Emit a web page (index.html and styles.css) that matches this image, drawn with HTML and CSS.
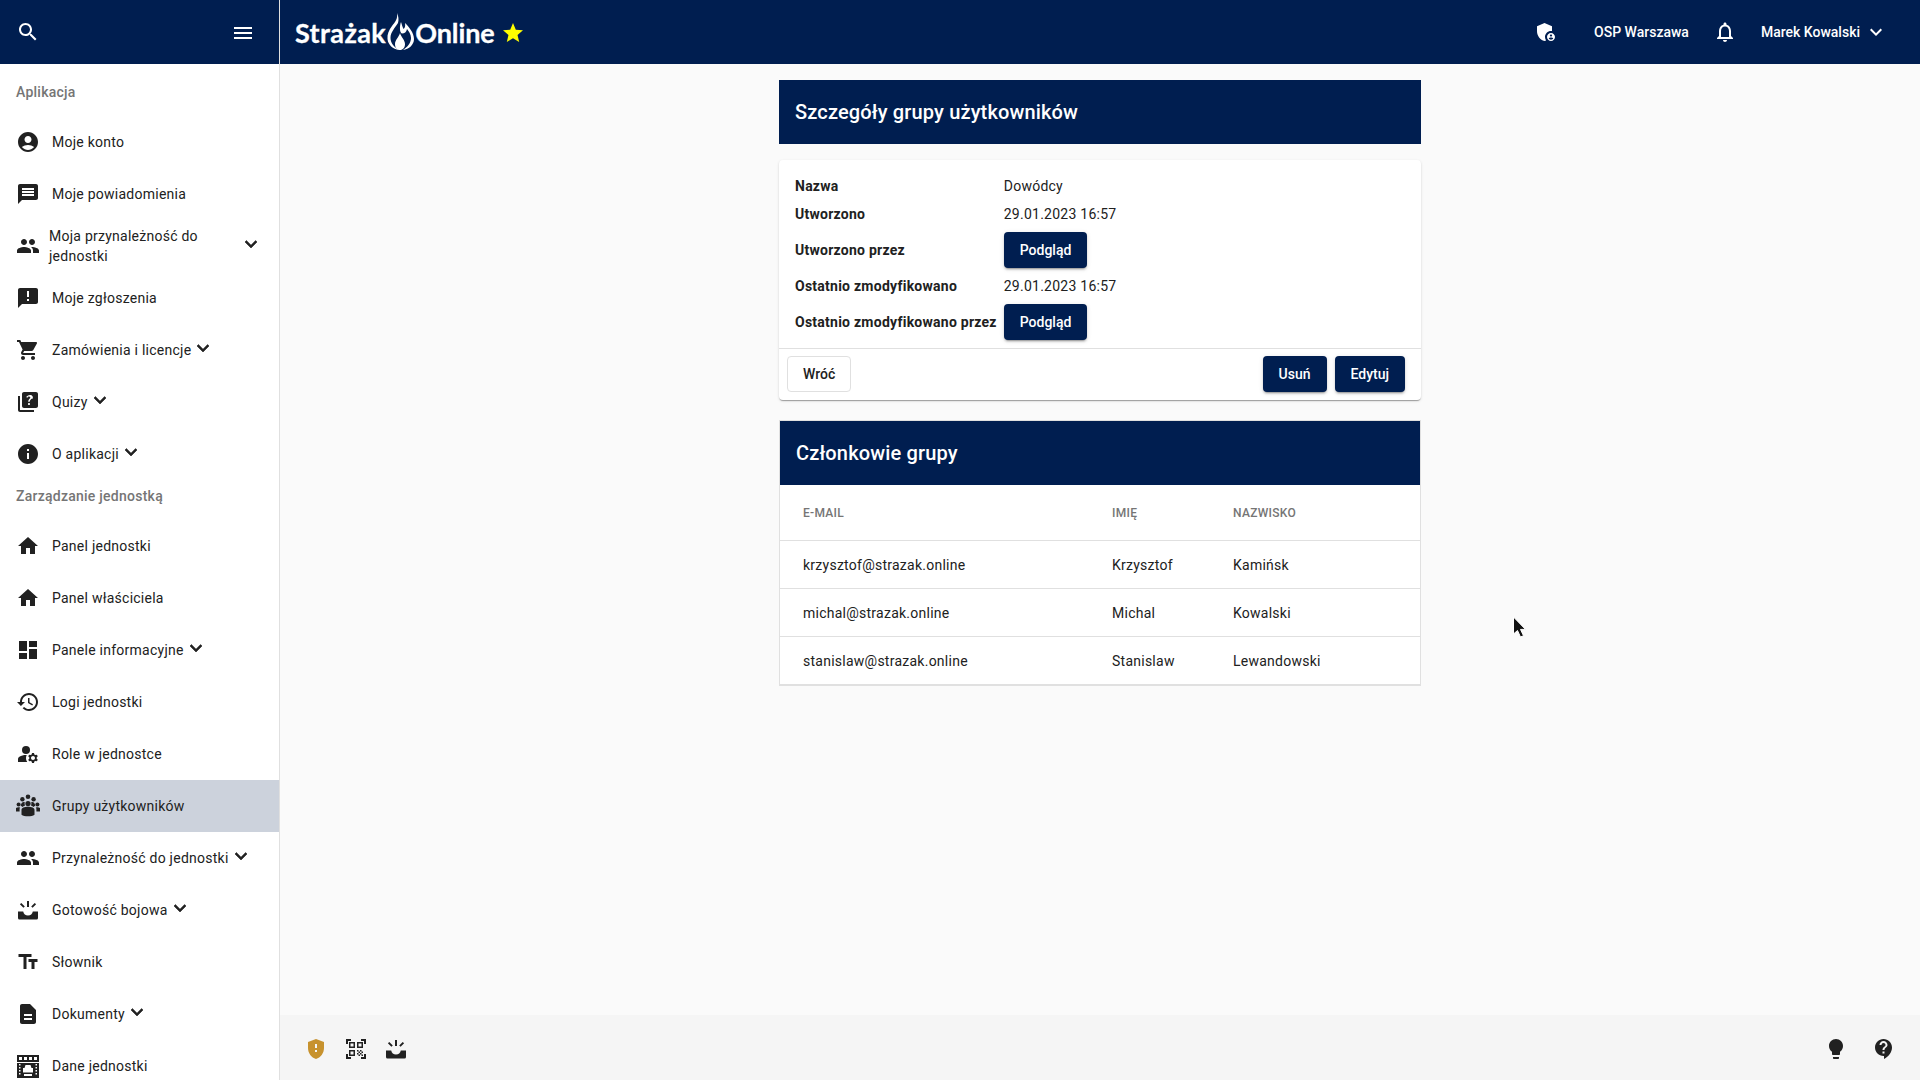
FILE: index.html
```html
<!DOCTYPE html>
<html lang="pl">
<head>
  <meta charset="UTF-8">
  <title>Strażak Online - Szczegóły grupy użytkowników</title>
  <link rel="stylesheet" href="styles.css">
</head>
<body>
  <svg class="sprite" xmlns="http://www.w3.org/2000/svg">
    <symbol id="i-search" viewBox="0 0 24 24"><path d="M15.5 14h-.79l-.28-.27C15.41 12.59 16 11.11 16 9.5 16 5.91 13.09 3 9.5 3S3 5.91 3 9.5 5.91 16 9.5 16c1.61 0 3.09-.59 4.23-1.57l.27.28v.79l5 4.99L20.49 19l-4.99-5zm-6 0C7.01 14 5 11.99 5 9.5S7.01 5 9.5 5 14 7.01 14 9.5 11.99 14 9.5 14z"/></symbol>
    <symbol id="i-menu" viewBox="0 0 24 24"><path d="M3 18h18v-2H3v2zm0-5h18v-2H3v2zm0-7v2h18V6H3z"/></symbol>
    <symbol id="i-more" viewBox="0 0 24 24"><path d="M16.59 8.59L12 13.17 7.41 8.59 6 10l6 6 6-6z"/></symbol>
    <symbol id="i-star" viewBox="0 0 24 24"><path d="M12 17.27L18.18 21l-1.64-7.03L22 9.24l-7.19-.61L12 2 9.19 8.63 2 9.24l5.46 4.73L5.82 21z"/></symbol>
    <symbol id="i-account" viewBox="0 0 24 24"><path d="M12 2C6.48 2 2 6.48 2 12s4.48 10 10 10 10-4.48 10-10S17.52 2 12 2zm0 4c1.93 0 3.5 1.57 3.5 3.5S13.93 13 12 13s-3.5-1.57-3.5-3.5S10.07 6 12 6zm0 14c-2.03 0-4.43-.82-6.14-2.88C7.55 15.8 9.68 15 12 15s4.45.8 6.14 2.12C16.43 19.18 14.03 20 12 20z"/></symbol>
    <symbol id="i-message" viewBox="0 0 24 24"><path d="M20 2H4c-1.1 0-1.99.9-1.99 2L2 22l4-4h14c1.1 0 2-.9 2-2V4c0-1.1-.9-2-2-2zm-2 12H6v-2h12v2zm0-3H6V9h12v2zm0-3H6V6h12v2z"/></symbol>
    <symbol id="i-people" viewBox="0 0 24 24"><path d="M16 11c1.66 0 2.99-1.34 2.99-3S17.66 5 16 5c-1.66 0-3 1.34-3 3s1.34 3 3 3zm-8 0c1.66 0 2.99-1.34 2.99-3S9.66 5 8 5C6.34 5 5 6.34 5 8s1.34 3 3 3zm0 2c-2.33 0-7 1.17-7 3.5V19h14v-2.5c0-2.33-4.67-3.5-7-3.5zm8 0c-.29 0-.62.02-.97.05 1.16.84 1.97 1.97 1.97 3.45V19h6v-2.5c0-2.33-4.67-3.5-7-3.5z"/></symbol>
    <symbol id="i-report" viewBox="0 0 24 24"><path d="M20 2H4c-1.1 0-1.99.9-1.99 2L2 22l4-4h14c1.1 0 2-.9 2-2V4c0-1.1-.9-2-2-2zm-7 9h-2V5h2v6zm0 4h-2v-2h2v2z"/></symbol>
    <symbol id="i-cart" viewBox="0 0 24 24"><path d="M7 18c-1.1 0-1.99.9-1.99 2S5.9 22 7 22s2-.9 2-2-.9-2-2-2zM1 2v2h2l3.6 7.59-1.35 2.45c-.16.28-.25.61-.25.96 0 1.1.9 2 2 2h12v-2H7.42c-.14 0-.25-.11-.25-.25l.03-.12.9-1.63h7.45c.75 0 1.41-.41 1.75-1.03l3.58-6.49c.08-.14.12-.31.12-.48 0-.55-.45-1-1-1H5.21l-.94-2H1zm16 16c-1.1 0-1.99.9-1.99 2s.89 2 1.99 2 2-.9 2-2-.9-2-2-2z"/></symbol>
    <symbol id="i-quiz" viewBox="0 0 24 24"><path d="M4 6H2v14c0 1.1.9 2 2 2h14v-2H4V6zm16-4H8c-1.1 0-2 .9-2 2v12c0 1.1.9 2 2 2h12c1.1 0 2-.9 2-2V4c0-1.1-.9-2-2-2zm-7.01 13c-.59 0-1.05-.47-1.05-1.05 0-.59.47-1.04 1.05-1.04.59 0 1.04.45 1.04 1.04-.01.58-.45 1.05-1.04 1.05zm2.5-6.17c-.63.93-1.23 1.21-1.56 1.81-.13.24-.18.4-.18 1.18h-1.52c0-.41-.06-1.08.26-1.65.41-.73 1.18-1.16 1.63-1.8.48-.68.21-1.94-1.14-1.94-.88 0-1.32.67-1.5 1.23l-1.37-.57C11.51 5.96 12.52 5 13.99 5c1.23 0 2.08.56 2.51 1.26.37.61.58 1.73.01 2.57z"/></symbol>
    <symbol id="i-info" viewBox="0 0 24 24"><path d="M12 2C6.48 2 2 6.48 2 12s4.48 10 10 10 10-4.48 10-10S17.52 2 12 2zm1 15h-2v-6h2v6zm0-8h-2V7h2v2z"/></symbol>
    <symbol id="i-home" viewBox="0 0 24 24"><path d="M10 20v-6h4v6h5v-8h3L12 3 2 12h3v8z"/></symbol>
    <symbol id="i-dashboard" viewBox="0 0 24 24"><path d="M3 13h8V3H3v10zm0 8h8v-6H3v6zm10 0h8V11h-8v10zm0-18v6h8V3h-8z"/></symbol>
    <symbol id="i-history" viewBox="0 0 24 24"><path d="M13 3c-4.97 0-9 4.03-9 9H1l3.89 3.89.07.14L9 12H6c0-3.87 3.13-7 7-7s7 3.13 7 7-3.13 7-7 7c-1.93 0-3.68-.79-4.94-2.06l-1.42 1.42C8.27 19.99 10.51 21 13 21c4.97 0 9-4.03 9-9s-4.03-9-9-9zm-1 5v5l4.28 2.54.72-1.21-3.5-2.08V8H12z"/></symbol>
    <symbol id="i-roles" viewBox="0 0 24 24"><circle cx="10" cy="8" r="4"/><path d="M10.67 13.02C10.45 13.01 10.23 13 10 13c-2.42 0-4.68.67-6.61 1.82C2.51 15.34 2 16.32 2 17.35V20h9.26C10.47 18.87 10 17.49 10 16c0-1.07.25-2.07.67-2.98z"/><path d="M20.75 16c0-.22-.03-.42-.06-.63l1.14-1.01-1-1.73-1.45.49c-.32-.27-.68-.48-1.08-.63L18 11h-2l-.3 1.49c-.4.15-.76.36-1.08.63l-1.45-.49-1 1.73 1.14 1.01c-.03.21-.06.41-.06.63s.03.42.06.63l-1.14 1.01 1 1.73 1.45-.49c.32.27.68.48 1.08.63L16 21h2l.3-1.49c.4-.15.76-.36 1.08-.63l1.45.49 1-1.73-1.14-1.01c.03-.21.06-.41.06-.63zM17 18c-1.1 0-2-.9-2-2s.9-2 2-2 2 .9 2 2-.9 2-2 2z"/></symbol>
    <symbol id="i-groups" viewBox="0 0 24 24"><circle cx="12" cy="2.8" r="2.3"/><circle cx="6.4" cy="5.2" r="2.2"/><circle cx="17.6" cy="5.2" r="2.2"/><circle cx="2.6" cy="10.4" r="2"/><circle cx="21.4" cy="10.4" r="2"/><circle cx="12" cy="9.6" r="2.6"/><path d="M-.5 17.500v-2.100c0-1.400 1.300-2.200 3.100-2.200.5 0 1 .1 1.400.2-.3.6-.4 1.200-.4 1.900v2.200H-.5zM24.500 17.500v-2.100c0-1.400-1.300-2.200-3.100-2.200-.5 0-1 .1-1.400.2.3.6.4 1.200.4 1.900v2.200h4.100zM4.800 11.800c.4-2.600 1.300-3.800 3-3.800.4 0 .7.100 1 .2-.1.500-.3 1-.2 1.400 0 .7.200 1.300.5 1.800-1 .3-1.800.8-2.400 1.500L4.800 11.800zM19.200 11.800c-.4-2.600-1.300-3.800-3-3.800-.4 0-.7.100-1 .2.1.5.300 1 .2 1.400 0 .7-.2 1.300-.5 1.800 1 .3 1.800.8 2.400 1.500l1.900-1.100zM5.500 20.800v-5c0-2 2.800-3.100 6.500-3.100s6.500 1.100 6.500 3.100v5c-1.500 1-3.800 1.500-6.500 1.500s-5-.5-6.500-1.500z"/></symbol>
    <symbol id="i-alert" viewBox="0 0 24 24"><path d="M2 13.500h5.200a4.900 4.900 0 0 0 9.600 0H22V20a1.500 1.500 0 0 1-1.500 1.500h-17A1.500 1.500 0 0 1 2 20z"/><path d="M11 3h2v6h-2zM3.900 6.300l1.400-1.400 3.500 3.500-1.400 1.400zM20.100 6.300l-1.400-1.400-3.500 3.500 1.400 1.400z"/></symbol>
    <symbol id="i-dict" viewBox="0 0 24 24"><path d="M2.500 4v3h5v12h3V7h5V4h-13zm19 5h-9v3h3v7h3v-7h3V9z"/></symbol>
    <symbol id="i-doc" viewBox="0 0 24 24"><path d="M14 2H6c-1.100 0-1.990.9-1.990 2L4 20c0 1.100.89 2 1.990 2H18c1.100 0 2-.9 2-2V8l-6-6zm2 16H8v-2h8v2zm0-4H8v-2h8v2z"/></symbol>
    <symbol id="i-unit" viewBox="0 0 24 24"><path d="M1 1h22v23H1zM3 3v3h3V3zm5 0v3h3V3zm5 0v3h3V3zm5 0v3h3V3zM1 8h22v1H1zM3 10v1.500h1.500V10zm0 3v1.500h1.500V13zm0 3v1.500h1.500V16zm0 3v1.500h1.500V19zM19.500 10v1.500H21V10zm0 3v1.500H21V13zm0 3v1.500H21V16zm0 3v1.500H21V19zM9.500 11l-1 3H7v4.500h10V14h-1.500l-1-3zM8 20v2h8v-2z" fill-rule="evenodd"/></symbol>
    <symbol id="i-admin" viewBox="0 0 24 24"><path d="M17 11c.34 0 .67.04 1 .09V6.270L10.500 3 3 6.270v4.910c0 4.540 3.200 8.790 7.500 9.820.55-.13 1.080-.32 1.600-.55C11.410 19.470 11 18.280 11 17c0-3.310 2.690-6 6-6z"/><path d="M17 13c-2.210 0-4 1.790-4 4s1.790 4 4 4 4-1.790 4-4-1.790-4-4-4zm0 1.380c.62 0 1.120.51 1.120 1.120s-.51 1.120-1.120 1.120-1.120-.51-1.120-1.120.5-1.120 1.120-1.120zm0 5.370c-.93 0-1.740-.46-2.240-1.170.05-.72 1.510-1.080 2.240-1.080s2.190.36 2.240 1.080c-.5.710-1.310 1.170-2.240 1.170z"/></symbol>
    <symbol id="i-bell" viewBox="0 0 24 24"><path d="M12 22c1.100 0 2-.9 2-2h-4c0 1.100.9 2 2 2zm6-6v-5c0-3.070-1.630-5.640-4.500-6.320V4c0-.83-.67-1.500-1.500-1.500s-1.500.67-1.500 1.500v.68C7.640 5.360 6 7.920 6 11v5l-2 2v1h16v-1l-2-2zm-2 1H8v-6c0-2.480 1.510-4.500 4-4.500s4 2.020 4 4.500v6z"/></symbol>
    <symbol id="i-gpp" viewBox="0 0 24 24"><path d="M12 2L4 5v6.090c0 5.050 3.410 9.760 8 10.910 4.590-1.150 8-5.860 8-10.910V5l-8-3zm1 13h-2v-2h2v2zm0-4h-2V7h2v4z"/></symbol>
    <symbol id="i-qr" viewBox="0 0 24 24"><path d="M9.500 6.500v3h-3v-3h3M11 5H5v6h6V5zm-1.500 9.500v3h-3v-3h3M11 13H5v6h6v-6zm6.500-6.500v3h-3v-3h3M19 5h-6v6h6V5zm-6 8h1.500v1.500H13V13zm1.500 1.500H16V16h-1.500v-1.500zM16 13h1.500v1.500H16V13zm-3 3h1.500v1.500H13V16zm1.500 1.500H16V19h-1.500v-1.500zM16 16h1.500v1.500H16V16zm1.500-1.500H19V16h-1.500v-1.500zm0 3H19V19h-1.500v-1.500zM22 7h-2V4h-3V2h5v5zm0 15v-5h-2v3h-3v2h5zM2 22h5v-2H4v-3H2v5zM2 2v5h2V4h3V2H2z"/></symbol>
    <symbol id="i-bulb" viewBox="0 0 24 24"><path d="M9 21c0 .55.45 1 1 1h4c.55 0 1-.45 1-1v-1H9v1zm3-19C8.140 2 5 5.140 5 9c0 2.380 1.190 4.470 3 5.740V17c0 .55.45 1 1 1h6c.55 0 1-.45 1-1v-2.260c1.810-1.270 3-3.360 3-5.740 0-3.860-3.140-7-7-7z"/></symbol>
    <symbol id="i-help" viewBox="0 0 24 24"><path d="M11.500 2C6.810 2 3 5.810 3 10.500S6.810 19 11.500 19h.5v3c4.860-2.340 8-7 8-11.500C20 5.810 16.190 2 11.500 2zm1 14.500h-2v-2h2v2zm0-3.500h-2c0-3.250 3-3 3-5 0-1.100-.9-2-2-2s-2 .9-2 2h-2c0-2.210 1.790-4 4-4s4 1.790 4 4c0 2.500-3 2.750-3 5z"/></symbol>
  </svg>

  <div class="app">
    <aside class="sidebar">
      <div class="side-top">
        <svg class="icon"><use href="#i-search"/></svg>
        <svg class="icon side-menu"><use href="#i-menu"/></svg>
      </div>
      <nav class="side-nav">
        <div class="nav-title">Aplikacja</div>
        <a class="nav-item"><svg class="icon"><use href="#i-account"/></svg><span>Moje konto</span></a>
        <a class="nav-item"><svg class="icon"><use href="#i-message"/></svg><span>Moje powiadomienia</span></a>
        <a class="nav-item nav-wrap"><svg class="icon"><use href="#i-people"/></svg><span>Moja przynależność do jednostki</span><svg class="icon nav-more"><use href="#i-more"/></svg></a>
        <a class="nav-item"><svg class="icon"><use href="#i-report"/></svg><span>Moje zgłoszenia</span></a>
        <a class="nav-item"><svg class="icon"><use href="#i-cart"/></svg><span>Zamówienia i licencje</span><svg class="icon"><use href="#i-more"/></svg></a>
        <a class="nav-item"><svg class="icon"><use href="#i-quiz"/></svg><span>Quizy</span><svg class="icon"><use href="#i-more"/></svg></a>
        <a class="nav-item"><svg class="icon"><use href="#i-info"/></svg><span>O aplikacji</span><svg class="icon"><use href="#i-more"/></svg></a>
        <div class="nav-title">Zarządzanie jednostką</div>
        <a class="nav-item"><svg class="icon"><use href="#i-home"/></svg><span>Panel jednostki</span></a>
        <a class="nav-item"><svg class="icon"><use href="#i-home"/></svg><span>Panel właściciela</span></a>
        <a class="nav-item"><svg class="icon"><use href="#i-dashboard"/></svg><span>Panele informacyjne</span><svg class="icon"><use href="#i-more"/></svg></a>
        <a class="nav-item"><svg class="icon"><use href="#i-history"/></svg><span>Logi jednostki</span></a>
        <a class="nav-item"><svg class="icon"><use href="#i-roles"/></svg><span>Role w jednostce</span></a>
        <a class="nav-item active"><svg class="icon"><use href="#i-groups"/></svg><span>Grupy użytkowników</span></a>
        <a class="nav-item"><svg class="icon"><use href="#i-people"/></svg><span>Przynależność do jednostki</span><svg class="icon"><use href="#i-more"/></svg></a>
        <a class="nav-item"><svg class="icon"><use href="#i-alert"/></svg><span>Gotowość bojowa</span><svg class="icon"><use href="#i-more"/></svg></a>
        <a class="nav-item"><svg class="icon"><use href="#i-dict"/></svg><span>Słownik</span></a>
        <a class="nav-item"><svg class="icon"><use href="#i-doc"/></svg><span>Dokumenty</span><svg class="icon"><use href="#i-more"/></svg></a>
        <a class="nav-item"><svg class="icon"><use href="#i-unit"/></svg><span>Dane jednostki</span></a>
      </nav>
    </aside>

    <div class="main">
      <header class="topbar">
        <div class="logo">
          <span class="logo-first">Strażak</span>
          <svg class="flame" viewBox="0 0 28 37">
            <path d="M10 0C11 6 8 9 5 13 2 17 0 21 .5 26 1 32 6 36 12 37 7 34 3.500 30 3.500 25 3.500 19 8 15 11 10 12 7 11.500 3 10 0z"/>
            <path d="M14 9C15 12 15.500 14 16.500 16 18 15 18.500 13 18 10 22 14 27 20 27 26 27 32 22 36 16 37 20.500 34 24 30 24 25 24 21 21.500 18 20 16 19.500 19 17.500 20.500 15 20.500 12.500 20 12.500 13 14 9z"/>
            <path d="M13 20C14 24 18 27 18 31 18 34.500 16 37 13 37 10 37 8 34.500 8 31 8 27 12 24 13 20z"/>
          </svg>
          <span>Online</span>
          <svg class="icon star"><use href="#i-star"/></svg>
        </div>
        <div class="top-right">
          <svg class="icon"><use href="#i-admin"/></svg>
          <span class="top-unit">OSP Warszawa</span>
          <svg class="icon top-bell"><use href="#i-bell"/></svg>
          <span class="top-user">Marek Kowalski</span>
          <svg class="icon"><use href="#i-more"/></svg>
        </div>
      </header>

      <main class="content">
        <div class="column">
          <h1 class="page-title">Szczegóły grupy użytkowników</h1>
          <section class="card">
            <table class="details">
              <tr><th>Nazwa</th><td>Dowódcy</td></tr>
              <tr><th>Utworzono</th><td>29.01.2023 16:57</td></tr>
              <tr class="btn-row"><th>Utworzono przez</th><td><button class="btn">Podgląd</button></td></tr>
              <tr><th>Ostatnio zmodyfikowano</th><td>29.01.2023 16:57</td></tr>
              <tr class="btn-row"><th>Ostatnio zmodyfikowano przez</th><td><button class="btn">Podgląd</button></td></tr>
            </table>
            <div class="card-actions">
              <button class="btn btn-plain">Wróć</button>
              <div class="actions-right">
                <button class="btn">Usuń</button>
                <button class="btn">Edytuj</button>
              </div>
            </div>
          </section>

          <section class="members">
            <h2 class="page-title">Członkowie grupy</h2>
            <table class="members-table">
              <thead>
                <tr><th class="col-mail">E-mail</th><th class="col-name">Imię</th><th>Nazwisko</th></tr>
              </thead>
              <tbody>
                <tr><td>krzysztof@strazak.online</td><td>Krzysztof</td><td>Kamińsk</td></tr>
                <tr><td>michal@strazak.online</td><td>Michal</td><td>Kowalski</td></tr>
                <tr><td>stanislaw@strazak.online</td><td>Stanislaw</td><td>Lewandowski</td></tr>
              </tbody>
            </table>
          </section>
        </div>
      </main>

      <footer class="bottombar">
        <div class="bottom-group">
          <svg class="icon warn"><use href="#i-gpp"/></svg>
          <svg class="icon"><use href="#i-qr"/></svg>
          <svg class="icon"><use href="#i-alert"/></svg>
        </div>
        <div class="bottom-group bottom-help">
          <svg class="icon"><use href="#i-bulb"/></svg>
          <svg class="icon"><use href="#i-help"/></svg>
        </div>
      </footer>
    </div>
  </div>

  <svg class="cursor" viewBox="0 0 14 24">
    <path d="M1.500 1v17l4-3.500 3 6.500 3-1.300-3-6.300h5z"/>
  </svg>
</body>
</html>
```

FILE: styles.css
```css
:root {
  --navy: #001e50;
  --text: #212121;
  --muted: #757575;
  --line: #e0e0e0;
}

* {
  box-sizing: border-box;
}

body {
  margin: 0;
  height: 100vh;
  overflow: hidden;
  font-family: Roboto, "Noto Sans", sans-serif;
  font-size: 14px;
  line-height: 20px;
  color: var(--text);
  background: #fafafa;
}

.sprite {
  display: none;
}

.icon {
  width: 24px;
  height: 24px;
  flex: none;
  fill: currentColor;
}

.app {
  display: flex;
  height: 100vh;
}

/* sidebar */
.sidebar {
  width: 280px;
  flex: none;
  display: flex;
  flex-direction: column;
  overflow: hidden;
}

.side-top {
  height: 64px;
  flex: none;
  display: flex;
  align-items: center;
  justify-content: space-between;
  padding: 0 24px 0 16px;
  background: var(--navy);
  color: #fff;
  border-right: 1px solid #e0e0e0;
}

.side-menu {
  margin-top: 2px;
}

.side-nav {
  flex: 1;
  padding-top: 12px;
  background: #fff;
  border-right: 1px solid var(--line);
  letter-spacing: 0.25px;
}

.nav-title {
  height: 40px;
  padding: 4px 16px 0;
  line-height: 24px;
  font-weight: 500;
  color: var(--muted);
}

.nav-item {
  height: 52px;
  display: flex;
  align-items: center;
  padding: 0 16px;
}

.nav-item > span {
  margin-left: 12px;
}

.nav-item > span + .icon {
  margin-bottom: 4px;
  stroke: currentColor;
  stroke-width: 0.6;
}

.nav-wrap > span {
  width: 165px;
  margin-left: 9px;
}

.nav-item > .nav-more {
  margin-left: auto;
  margin-right: 0;
}

.active {
  background: #ccd2dc;
}

/* top bar */
.main {
  flex: 1;
  min-width: 0;
  display: flex;
  flex-direction: column;
}

.topbar {
  height: 64px;
  flex: none;
  display: flex;
  align-items: center;
  justify-content: space-between;
  padding: 0 32px 0 15px;
  background: var(--navy);
  color: #fff;
}

.logo {
  display: flex;
  align-items: center;
  padding-top: 2px;
  font-family: Lato, "Open Sans", sans-serif;
  font-size: 27px;
  font-weight: 700;
  line-height: 36px;
  letter-spacing: -0.1px;
  -webkit-text-stroke: 0.3px #fff;
}

.logo-first {
  letter-spacing: 0.4px;
}

.flame {
  width: 28px;
  height: 37px;
  margin: -3px 0 0 1px;
  fill: #fff;
}

.star {
  margin: 0 0 0 6px;
  fill: #ffff00;
}

.top-right {
  display: flex;
  align-items: center;
  font-weight: 500;
}

.top-unit {
  margin-left: 36px;
}

.top-bell {
  margin-left: 24px;
}

.top-user {
  margin: 0 4px 0 24px;
}

/* content */
.content {
  flex: 1;
  min-height: 0;
  display: flex;
  justify-content: center;
  padding-top: 16px;
}

.column {
  width: 642px;
}

.page-title {
  height: 64px;
  margin: 0;
  padding-left: 16px;
  display: flex;
  align-items: center;
  font-size: 20px;
  font-weight: 500;
  letter-spacing: 0.15px;
  background: var(--navy);
  color: #fff;
}

.card {
  margin-top: 16px;
  background: #fff;
  border-radius: 4px;
  box-shadow: 0 2px 1px -1px rgba(0,0,0,0.2), 0 1px 1px 0 rgba(0,0,0,0.14), 0 1px 3px 0 rgba(0,0,0,0.12);
}

.details {
  margin-left: 16px;
  padding: 12px 0 4px;
  border-spacing: 0;
  letter-spacing: 0.25px;
}

.details th {
  padding: 0 7px 0 0;
  height: 28px;
  text-align: left;
  font-weight: 700;
}

.details td {
  padding: 0;
  height: 28px;
}

.btn-row th,
.btn-row td {
  height: 44px;
}

.btn {
  height: 36px;
  min-width: 64px;
  padding: 0 16px;
  border: none;
  border-radius: 4px;
  font-family: inherit;
  font-size: 14px;
  font-weight: 500;
  background: var(--navy);
  color: #fff;
  box-shadow: 0 3px 1px -2px rgba(0,0,0,0.2), 0 2px 2px 0 rgba(0,0,0,0.14), 0 1px 5px 0 rgba(0,0,0,0.12);
}

.btn-plain {
  padding: 0 15px;
  background: #fff;
  color: var(--text);
  border: 1px solid var(--line);
  box-shadow: none;
}

.card-actions {
  display: flex;
  justify-content: space-between;
  padding: 7px 16px 8px 8px;
  border-top: 1px solid var(--line);
}

.actions-right {
  display: flex;
  gap: 8px;
}

.members {
  margin-top: 20px;
  background: #fff;
  border: 1px solid var(--line);
  border-bottom-width: 2px;
}

.members-table {
  width: 100%;
  border-collapse: collapse;
  table-layout: fixed;
  letter-spacing: 0.25px;
}

.members-table th,
.members-table td {
  padding: 2px 0 0 24px;
  text-align: left;
  border-bottom: 1px solid var(--line);
}

.members-table th:first-child,
.members-table td:first-child {
  padding-left: 23px;
}

.members-table th {
  height: 55px;
  font-size: 12px;
  font-weight: 500;
  letter-spacing: 0.3px;
  text-transform: uppercase;
  color: var(--muted);
}

.members-table td {
  height: 48px;
}

.members-table tbody tr:last-child td {
  border-bottom: none;
}

.col-mail {
  width: 308px;
}

.col-name {
  width: 121px;
}

/* bottom bar */
.bottombar {
  height: 65px;
  flex: none;
  display: flex;
  align-items: center;
  justify-content: space-between;
  padding: 2px 24px 0;
  background: #f5f5f5;
}

.bottom-group {
  display: flex;
  gap: 16px;
}

.bottom-help {
  gap: 24px;
}

.warn {
  color: #c7922e;
}

.cursor {
  position: absolute;
  left: 1512px;
  top: 616px;
  width: 14px;
  height: 24px;
  fill: #111;
  stroke: #fff;
  stroke-width: 1;
}
```
